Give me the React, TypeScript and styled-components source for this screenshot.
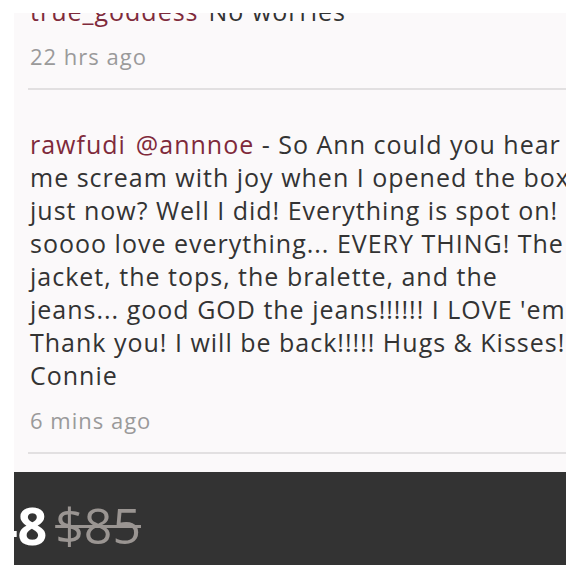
import React from 'react';
import styled, {createGlobalStyle} from 'styled-components';

const GlobalStyle = createGlobalStyle`
  html, body {
    margin: 0;
    padding: 0;
    background: #ffffff;
  }
  body {
    font-family: "Open Sans", Lato, Arial, sans-serif;
    -webkit-font-smoothing: antialiased;
  }
`;

const Page = styled.div`
  width: 580px;
  height: 580px;
  box-sizing: border-box;
  padding: 13px 14px 0 14px;
  overflow: hidden;
`;

const Panel = styled.div`
  background: #fbf9fa;
  overflow: hidden;
  display: flex;
  flex-direction: column;
`;

const CommentList = styled.div`
  height: 459px;
  overflow: hidden;
`;

const Comment = styled.div<{first?: boolean}>`
  margin-left: 14px;
  margin-top: ${props => (props.first ? '-18px' : '0')};
  padding: ${props => (props.first ? '0' : '38px')} 0 18px 2px;
  border-bottom: 2px solid #e2e0e1;
`;

const Body = styled.div`
  font-size: 25px;
  line-height: 33px;
  letter-spacing: 1px;
  color: #333333;
  white-space: nowrap;
`;

const User = styled.span`
  color: #7f2a3b;
  margin-right: 10px;
`;

const Mention = styled.span`
  color: #7f2a3b;
`;

const Stamp = styled.div`
  margin-top: 14px;
  font-size: 22px;
  line-height: 28px;
  letter-spacing: 1px;
  color: #9a9a9a;
`;

const PriceBar = styled.div`
  height: 93px;
  box-sizing: border-box;
  padding-top: 12px;
  background: #333333;
  display: flex;
  align-items: center;
  gap: 8px;
  overflow: hidden;
  white-space: nowrap;
`;

const Current = styled.span`
  margin-left: -56px;
  font-size: 52px;
  font-weight: 700;
  color: #ffffff;
`;

const Original = styled.span`
  font-size: 50px;
  color: #9a9592;
  text-decoration: line-through;
  text-decoration-thickness: 3px;
`;

const lines = [
  'me scream with joy when I opened the box',
  'just now? Well I did! Everything is spot on! I',
  'soooo love everything... EVERY THING! The',
  'jacket, the tops, the bralette, and the',
  "jeans... good GOD the jeans!!!!!! I LOVE 'em",
  'Thank you! I will be back!!!!! Hugs & Kisses!',
  'Connie'
];

export default function App() {
  return (
    <>
      <GlobalStyle />
      <Page>
        <Panel>
          <CommentList>
            <Comment first>
              <Body>
                <User>true_goddess</User>No worries
              </Body>
              <Stamp>22 hrs ago</Stamp>
            </Comment>
            <Comment>
              <Body>
                <User>rawfudi</User>
                <Mention>@annnoe</Mention> - So Ann could you hear
                {lines.map(line => (
                  <div key={line}>{line}</div>
                ))}
              </Body>
              <Stamp>6 mins ago</Stamp>
            </Comment>
          </CommentList>
          <PriceBar>
            <Current>$48</Current>
            <Original>$85</Original>
          </PriceBar>
        </Panel>
      </Page>
    </>
  );
}
